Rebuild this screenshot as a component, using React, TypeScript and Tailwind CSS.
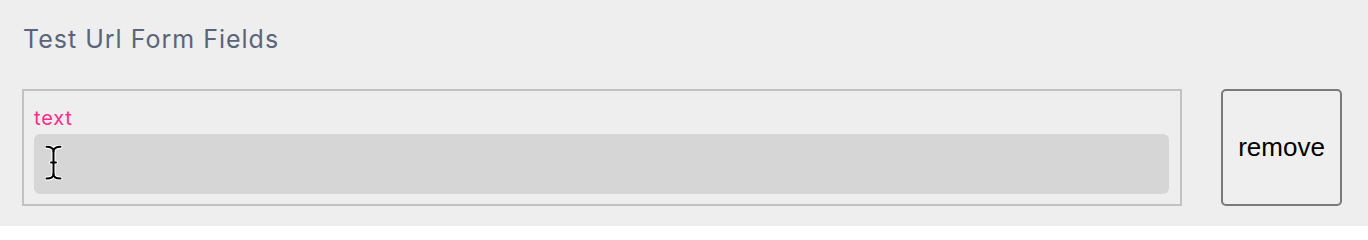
import React from "react";

function IBeam() {
  return (
    <svg width="18" height="36" viewBox="0 0 18 36" className="absolute left-[11px] top-[11px]">
      <g fill="none" strokeLinecap="round" strokeLinejoin="round">
        <g stroke="#ffffff" strokeWidth="4.2">
          <path d="M1.5 1.8 C5.5 1.8 8.5 2.8 8.5 6.5 C8.5 2.8 11.5 1.8 15.5 1.8" />
          <path d="M8.5 6.5 V29" />
          <path d="M1.5 33.5 C5.5 33.5 8.5 32.5 8.5 29 C8.5 32.5 11.5 33.5 15.5 33.5" />
          <path d="M6 17.5 H11" />
        </g>
        <g stroke="#000000" strokeWidth="2">
          <path d="M1.5 1.8 C5.5 1.8 8.5 2.8 8.5 6.5 C8.5 2.8 11.5 1.8 15.5 1.8" />
          <path d="M8.5 6.5 V29" />
          <path d="M1.5 33.5 C5.5 33.5 8.5 32.5 8.5 29 C8.5 32.5 11.5 33.5 15.5 33.5" />
          <path d="M6 17.5 H11" />
        </g>
      </g>
    </svg>
  );
}

export default function App() {
  return (
    <div className="h-[226px] w-full bg-[#eeeeee] pl-[22px] pr-[26px] pt-[23px] font-['Inter',sans-serif]">
      <h2 className="pl-[1px] text-[25px] font-normal leading-8 tracking-[1px] text-[#5a6579]">Test Url Form Fields</h2>
      <div className="mt-[34px] flex items-start gap-[39px]">
        <div className="flex h-[117px] w-[1160px] flex-col border-2 border-[#c2c2c2] pl-[10px] pr-[11px] pt-[15px] pb-[10px]">
          <label className="text-[20px] leading-6 tracking-[0.8px] text-[#ff2b88]">text</label>
          <div className="relative mt-[4px] h-[60px] w-full rounded-[6px] bg-[#d6d6d6]">
            <IBeam />
          </div>
        </div>
        <button className="flex h-[117px] w-[121px] items-center justify-center rounded-[5px] border-2 border-[#7a7a7a] bg-[#efefef] font-['Liberation_Sans',Arial,sans-serif] text-[26px] text-black">
          remove
        </button>
      </div>
    </div>
  );
}
